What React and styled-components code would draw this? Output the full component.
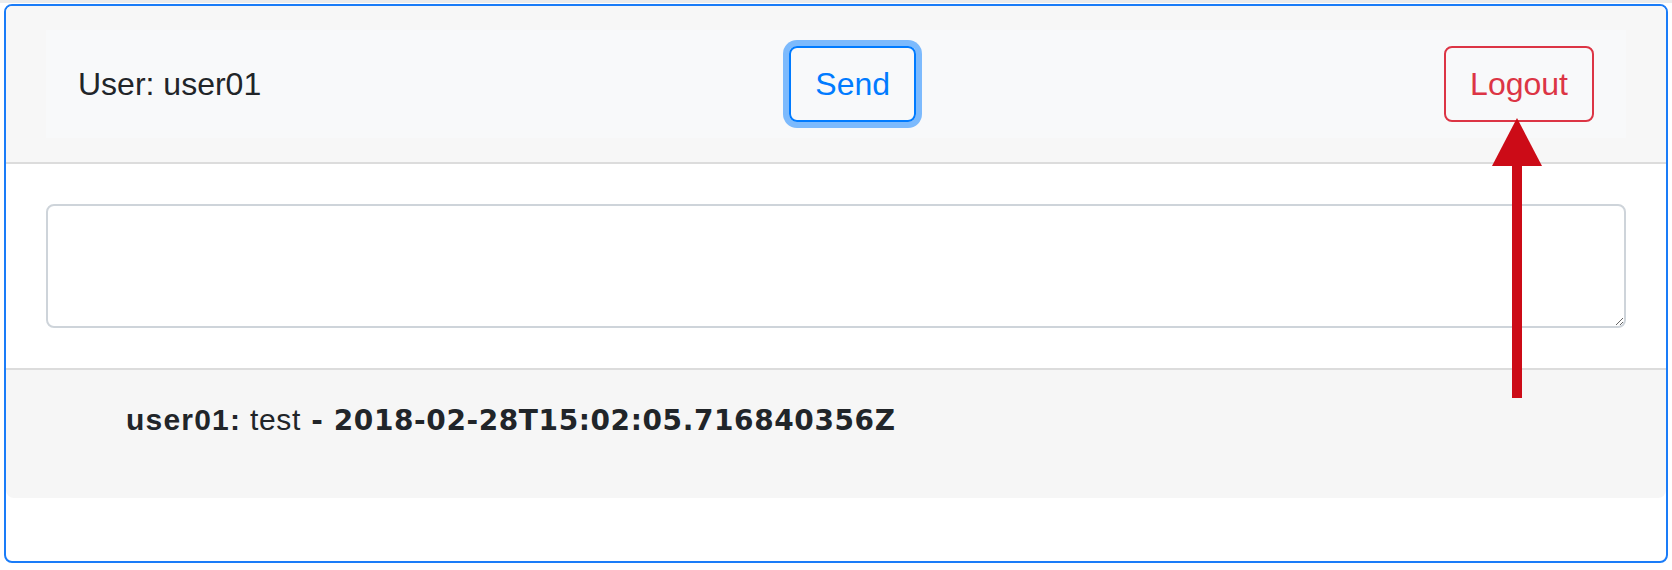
import styled, { createGlobalStyle } from 'styled-components';

const GlobalStyle = createGlobalStyle`
  html, body {
    margin: 0;
    padding: 0;
    background: #ffffff;
  }
  body {
    font-family: "Liberation Sans", Arial, sans-serif;
    color: #212529;
  }
`;

export default function App() {
  return (
    <>
      <GlobalStyle />
      <PageStyle>
        <CardStyle>
          <CardHeaderStyle>
            <NavbarStyle>
              <UserLabelStyle>User: user01</UserLabelStyle>
              <ButtonStyle $tone='primary' $focused>Send</ButtonStyle>
              <ButtonStyle $tone='danger'>Logout</ButtonStyle>
            </NavbarStyle>
          </CardHeaderStyle>
          <CardBodyStyle>
            <TextareaStyle />
          </CardBodyStyle>
          <MessageListStyle>
            <MessageStyle>
              <AuthorStyle>user01:</AuthorStyle>
              <BodyTextStyle> test</BodyTextStyle>
              <StampStyle> - 2018-02-28T15:02:05.716840356Z</StampStyle>
            </MessageStyle>
          </MessageListStyle>
        </CardStyle>

        {/* 화살표 주석 */}
        <ArrowStyle width='54' height='284' viewBox='0 0 54 284'>
          <polygon points='27,2 2,50 52,50' fill='#cc0b17' />
          <rect x='22' y='49' width='10' height='233' fill='#cc0b17' />
        </ArrowStyle>
      </PageStyle>
    </>
  );
}

const PageStyle = styled.div`
  position: relative;
  width: 1672px;
  height: 570px;
  box-sizing: border-box;
  border-top: 3px solid #ececec;
  padding: 1px 4px 0;
`;

const CardStyle = styled.div`
  display: flex;
  flex-direction: column;
  height: 559px;
  box-sizing: border-box;
  border: 2px solid #1a7cf8;
  border-radius: 8px;
  overflow: hidden;
  background: #ffffff;
`;

const CardHeaderStyle = styled.div`
  padding: 24px 40px;
  background: #f7f7f7;
  border-bottom: 2px solid #dcdcdc;
`;

const NavbarStyle = styled.nav`
  display: flex;
  align-items: center;
  justify-content: space-between;
  padding: 16px 32px;
  background: #f8f9fa;
`;

const UserLabelStyle = styled.span`
  font-size: 32px;
  line-height: 48px;
  color: #212529;
`;

const ButtonStyle = styled.button`
  font-family: "Liberation Sans", Arial, sans-serif;
  font-size: 32px;
  line-height: 48px;
  padding: 12px 24px;
  background: transparent;
  border: 2px solid ${(props) => (props.$tone === 'danger' ? '#dc3545' : '#007bff')};
  color: ${(props) => (props.$tone === 'danger' ? '#dc3545' : '#007bff')};
  border-radius: 8px;
  box-shadow: ${(props) => (props.$focused ? '0 0 0 6px rgba(0, 123, 255, 0.5)' : 'none')};
  cursor: pointer;
`;

const CardBodyStyle = styled.div`
  padding: 40px;
  border-bottom: 2px solid #dcdcdc;
`;

const TextareaStyle = styled.textarea`
  display: block;
  width: 100%;
  height: 124px;
  box-sizing: border-box;
  border: 2px solid #ced4da;
  border-radius: 8px;
  padding: 12px 24px;
  font-size: 32px;
  font-family: "Liberation Sans", Arial, sans-serif;
  background: #ffffff;
  outline: none;
`;

const MessageListStyle = styled.div`
  padding: 29px 0 56px 120px;
  background: #f6f6f6;
  border-radius: 0 0 8px 8px;
`;

const MessageStyle = styled.div`
  font-size: 30px;
  line-height: 42px;
  color: #212529;
  white-space: pre;
`;

const AuthorStyle = styled.b`
  letter-spacing: 1.2px;
`;

const BodyTextStyle = styled.span`
  letter-spacing: 0.6px;
`;

const StampStyle = styled.b`
  font-family: "DejaVu Sans", "Liberation Sans", sans-serif;
  font-size: 28px;
  letter-spacing: 0.6px;
`;

const ArrowStyle = styled.svg`
  position: absolute;
  left: 1490px;
  top: 113px;
`;
